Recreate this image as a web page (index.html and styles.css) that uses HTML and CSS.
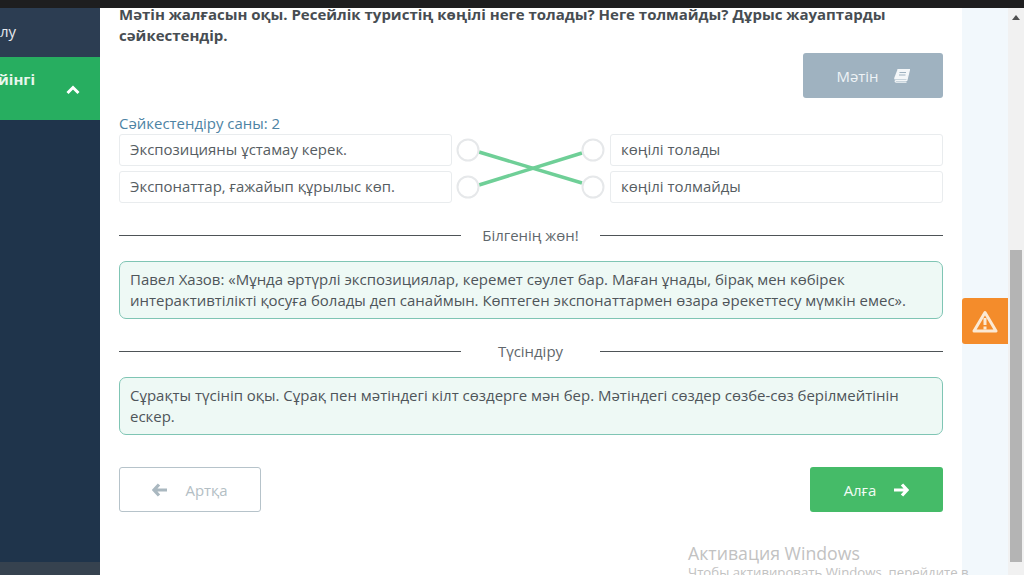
FILE: index.html
```html
<!DOCTYPE html>
<html lang="kk">
<head>
<meta charset="utf-8">
<title>Сәйкестендіру</title>
<link rel="stylesheet" href="styles.css">
</head>
<body>
<div class="topbar"></div>
<div class="shell">
  <aside class="sidebar">
    <div class="side-item"><span class="side-text">лу</span></div>
    <div class="side-active">
      <span class="side-active-text">йінгі</span>
      <svg class="chevron" width="14" height="10" viewBox="0 0 14 10"><path d="M1.500 8 7 2.500 12.500 8" fill="none" stroke="#fff" stroke-width="3"/></svg>
    </div>
    <div class="side-fill"></div>
    <div class="side-foot"></div>
  </aside>
  <main class="main">
    <h1 class="question">Мәтін жалғасын оқы. Ресейлік туристің көңілі неге толады? Неге толмайды? Дұрыс жауаптарды сәйкестендір.</h1>
    <div class="text-row">
      <button class="btn btn-text">Мәтін
        <svg width="17" height="14" viewBox="0 0 17 14"><path d="M4.500.500H16.500L13.800 11.500H3.200C1.800 11.500 1.800 13.200 3.200 13.200H13.500" fill="none" stroke="#f4f7f9" stroke-width="1.200"/><path d="M4.500.500H16.500L13.800 10.500H2.200C1.200 10.500 1 9.500 1.300 8.700z" fill="#f4f7f9"/><path d="M6.500 3.500h6.500M6 6h6.500" stroke="#9fb2c0" stroke-width="1"/></svg>
      </button>
    </div>
    <div class="count">Сәйкестендіру саны: 2</div>
    <div class="match">
      <div class="cell cell-left-a">Экспозицияны ұстамау керек.</div>
      <svg class="links" width="158" height="69" viewBox="0 0 158 69">
        <line x1="27" y1="18" x2="130" y2="49" class="link"/>
        <line x1="27" y1="51" x2="130" y2="19" class="link"/>
        <circle cx="16" cy="16" r="10.500" class="dot"/>
        <circle cx="16" cy="53" r="10.500" class="dot"/>
        <circle cx="141" cy="16" r="10.500" class="dot"/>
        <circle cx="141" cy="53" r="10.500" class="dot"/>
      </svg>
      <div class="cell cell-right-a">көңілі толады</div>
      <div class="cell cell-left-b">Экспонаттар, ғажайып құрылыс көп.</div>
      <div class="cell cell-right-b">көңілі толмайды</div>
    </div>
    <div class="divider"><span class="rule rule-left"></span><span class="divider-label">Білгенің жөн!</span><span class="rule"></span></div>
    <div class="note">Павел Хазов: «Мұнда әртүрлі экспозициялар, керемет сәулет бар. Маған ұнады, бірақ мен көбірек интерактивтілікті қосуға болады деп санаймын. Көптеген экспонаттармен өзара әрекеттесу мүмкін емес».</div>
    <div class="divider"><span class="rule rule-left"></span><span class="divider-label">Түсіндіру</span><span class="rule"></span></div>
    <div class="note">Сұрақты түсініп оқы. Сұрақ пен мәтіндегі кілт сөздерге мән бер. Мәтіндегі сөздер сөзбе-сөз берілмейтінін ескер.</div>
    <div class="nav">
      <button class="btn btn-back">
        <svg width="16" height="14" viewBox="0 0 16 14"><path d="M7 1.500 2 7l5 5.500M2.500 7H15" fill="none" stroke="#aab8c0" stroke-width="3.200"/></svg>
        <span>Артқа</span>
      </button>
      <button class="btn btn-next">
        <span>Алға</span>
        <svg width="16" height="14" viewBox="0 0 16 14"><path d="M9 1.500 14 7l-5 5.500M13.500 7H1" fill="none" stroke="#fff" stroke-width="3.200"/></svg>
      </button>
    </div>
  </main>
  <div class="gutter"></div>
  <div class="scrollbar">
    <svg class="scroll-up" width="8" height="5" viewBox="0 0 8 5"><path d="M4 0 8 5H0z" fill="#505050"/></svg>
    <div class="thumb"></div>
  </div>
</div>
<div class="alert">
  <svg width="26" height="23" viewBox="0 0 26 23"><path d="M13 2.500 24 21H2z" fill="none" stroke="#fbe9d4" stroke-width="3" stroke-linejoin="round"/><path d="M13 8v7M13 16.500v3" stroke="#fbe9d4" stroke-width="3"/></svg>
</div>
<div class="watermark">
  <div class="wm-title">Активация Windows</div>
  <div class="wm-sub">Чтобы активировать Windows, перейдите в</div>
</div>
</body>
</html>
```

FILE: styles.css
```css
* { box-sizing: border-box; }
html, body { margin: 0; height: 100%; overflow: hidden; }
body {
  width: 1024px;
  height: 575px;
  display: flex;
  flex-direction: column;
  font-family: "Open Sans", "Noto Sans", sans-serif;
  color: #4b5358;
  background: #fff;
  position: relative;
}
.topbar { height: 8px; flex: none; background: #1e1e1f; }
.shell { flex: 1; display: flex; min-height: 0; }

.sidebar { width: 100px; flex: none; display: flex; flex-direction: column; background: #1f344b; }
.side-item { height: 49px; flex: none; background: #2c3d52; display: flex; align-items: center; }
.side-text { font-size: 15px; color: #e6eaee; margin-top: -3px; }
.side-active { height: 63px; flex: none; background: #27ae60; position: relative; padding-top: 12px; overflow: hidden; }
.side-active-text { display: block; margin-left: -2px; font-size: 15px; font-weight: 700; color: #e8f7ee; }
.chevron { position: absolute; left: 66px; top: 28px; }
.side-fill { flex: 1; }
.side-foot { height: 13px; flex: none; background: #36424f; }

.main { width: 862px; flex: none; padding: 0 19px; background: #fff; }
.question { margin: -4px 0 0; font-size: 15px; line-height: 21px; font-weight: 700; color: #474d52; }
.text-row { display: flex; justify-content: flex-end; margin-top: 7px; }
.btn { font-family: inherit; font-size: 14.950px; border-radius: 3px; height: 45px; display: flex; align-items: center; justify-content: center; }
.btn-text { width: 140px; border: 0; background: #9fb2c0; color: #eef3f6; gap: 14px; }
.count { margin-top: 15px; font-size: 14.950px; line-height: 20px; color: #4d83a4; }

.match { display: grid; grid-template-columns: 333px 158px 333px; grid-template-rows: 32px 32px; row-gap: 5px; margin-top: 1px; }
.cell { display: flex; align-items: center; padding: 0 0 2px 10px; font-size: 14.950px; color: #565d62; background: #fff; border: 1px solid #e9ecee; border-radius: 3px; }
.cell-left-a { grid-area: 1 / 1; }
.cell-right-a { grid-area: 1 / 3; }
.cell-left-b { grid-area: 2 / 1; }
.cell-right-b { grid-area: 2 / 3; }
.links { grid-area: 1 / 2 / 3 / 3; }
.link { stroke: #6fcf97; stroke-width: 3.500; }
.dot { fill: #fff; stroke: #e6e8ea; stroke-width: 2; }

.divider { display: flex; align-items: center; height: 20px; margin-top: 22px; font-size: 14.950px; color: #5f676c; }
.rule { height: 1px; background: #4e5457; flex: 1; }
.rule-left { flex: none; width: 342px; }
.divider-label { width: 139px; text-align: center; flex: none; }
.note { margin-top: 15px; height: 58px; padding: 7px 10px; font-size: 14.980px; line-height: 21px; color: #4e555a; background: #eef9f5; border: 1.500px solid #7fc5b4; border-radius: 7px; }
.divider + .note { margin-top: 16px; }

.nav { display: flex; justify-content: space-between; margin-top: 32px; }
.btn-back { width: 142px; background: #fff; border: 1px solid #b6c3ca; color: #b3bec4; gap: 17px; }
.btn-next { width: 133px; background: #45bb68; border: 0; color: #f2fbf5; gap: 17px; }

.gutter { width: 46px; flex: none; background: #f2f8fc; }
.scrollbar { width: 16px; flex: none; background: #f1f1f1; display: flex; flex-direction: column; align-items: center; padding-top: 7px; }
.scroll-up { flex: none; }
.thumb { width: 12px; height: 312px; margin-top: 230px; background: #b4b4b4; }

.alert { position: absolute; left: 962px; top: 298px; width: 46px; height: 46px; background: #f48c2b; border-radius: 3px 0 0 3px; display: flex; align-items: center; justify-content: center; }
.watermark { position: absolute; left: 688px; top: 542px; color: #c2c2c2; white-space: nowrap; }
.wm-title { font-size: 17.700px; line-height: 22px; }
.wm-sub { font-size: 13.200px; line-height: 16px; }
```
